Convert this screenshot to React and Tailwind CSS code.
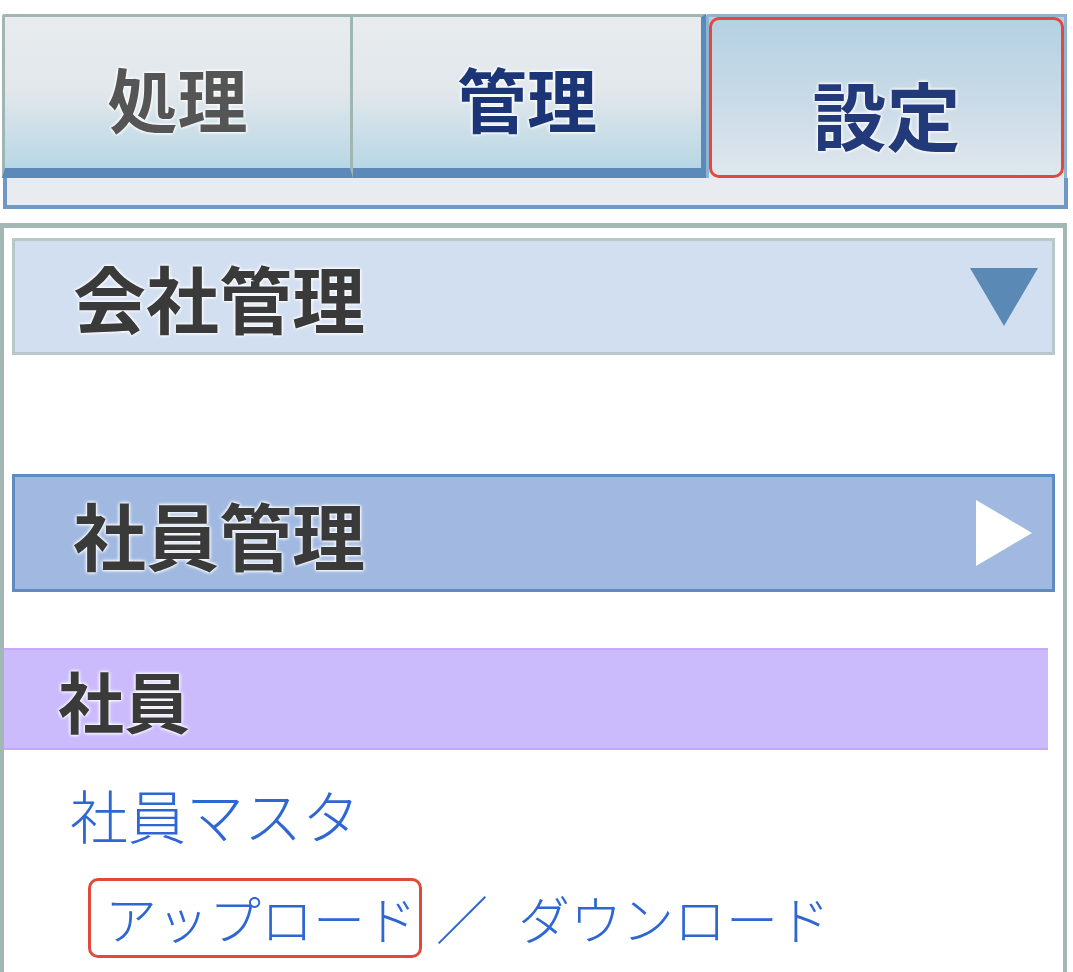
import React from "react";

const jp = { fontFamily: '"Noto Sans CJK JP", "Noto Sans", sans-serif' };

function Tab({ label, active, tone, edge }) {
  if (active) {
    return (
      <div className="relative h-[164px] w-[361px] border-[3px] border-b-0 border-[#8fb3d3] bg-linear-to-b from-[#b3d1e2] via-[#c8dae7] to-[#e1e7ee] flex items-center justify-center pt-[30px] rounded-tl-[3px]">
        <span className="text-[74px] font-bold leading-none text-[#22397a] [text-shadow:0_0_3px_#fff,0_0_3px_#fff,0_0_4px_#fff]">
          {label}
        </span>
        {/* highlight box */}
        <div className="absolute inset-0 border-[3px] border-[#e2493a] rounded-[10px]" />
      </div>
    );
  }
  return (
    <div
      className={
        "h-[164px] border-t-[3px] border-b-[10px] border-t-[#a0b6b2] border-b-[#5b8ab8] bg-linear-to-b from-[#e8ecef] via-[#e1e7eb] to-[#b7d7e5] flex items-center justify-center pt-[10px] " +
        (edge === "first"
          ? "w-[351px] border-x-[3px] border-x-[#a0b6b2] rounded-tl-[3px]"
          : "w-[353px] border-r-[5px] border-r-[#5b8ab8]")
      }
    >
      <span
        className={
          "text-[70px] font-bold leading-none [text-shadow:0_0_3px_#fff,0_0_3px_#fff,0_0_4px_#fff] " +
          (tone === "navy" ? "text-[#1b3577]" : "text-[#555555]")
        }
      >
        {label}
      </span>
    </div>
  );
}

export default function App() {
  return (
    <div className="w-[1073px] h-[972px] bg-white overflow-hidden pt-[14px]" style={jp}>
      {/* top tabs */}
      <div className="pl-[2px] w-[1068px]">
        <div className="flex">
          <Tab label="処理" edge="first" />
          <Tab label="管理" tone="navy" />
          <Tab label="設定" active />
        </div>
        <div className="h-[31px] ml-[1px] border-x-[4px] border-b-[4px] border-[#7098c3] bg-[#e8ecf0]" />
      </div>

      {/* menu panel */}
      <div className="mt-[14px] w-[1067px] h-[800px] border-t-[5px] border-x-[4px] border-[#a3b8b5] pt-[10px]">
        <div className="mx-[8px] h-[117px] border-[3px] border-[#b7c8c8] bg-[#d2dff0] flex items-center justify-between pl-[58px] pr-[14px]">
          <span className="text-[73px] font-bold leading-none text-[#3a3a3a] [text-shadow:0_0_3px_#fff,0_0_3px_#fff,0_0_4px_#fff]">
            会社管理
          </span>
          <svg width="68" height="58" viewBox="0 0 68 58">
            <polygon points="0,0 68,0 34,58" fill="#5b89b6" />
          </svg>
        </div>

        <div className="mt-[119px] mx-[8px] h-[118px] border-[3px] border-[#5f8bc0] bg-[#a1b9e1] flex items-center justify-between pl-[58px] pr-[20px]">
          <span className="text-[73px] font-bold leading-none text-[#3a3a3a] [text-shadow:0_0_3px_#fff,0_0_3px_#fff,0_0_4px_#fff]">
            社員管理
          </span>
          <svg width="56" height="66" viewBox="0 0 56 66">
            <polygon points="0,0 56,33 0,66" fill="#ffffff" />
          </svg>
        </div>

        <div className="mt-[56px] mr-[15px] h-[102px] border-y-[2px] border-[#c6a8f8] bg-[#cbbbfd] flex items-center pl-[54px]">
          <span className="text-[66px] font-bold leading-none text-[#3a3a3a] [text-shadow:0_0_3px_#fff,0_0_3px_#fff,0_0_4px_#fff]">
            社員
          </span>
        </div>

        <div className="h-[104px] flex items-center pl-[66px] mt-[12px]">
          <a className="text-[58px] font-light leading-none text-[#2e66d2]">社員マスタ</a>
        </div>
        <div className="h-[104px] flex items-center pl-[84px] text-[52px] font-light leading-none text-[#2e66d2]">
          <a className="border-[3px] border-[#e04a3a] rounded-[10px] pl-[14px] pr-[2px] py-[11px]">
            アップロード
          </a>
          <span className="ml-[14px]">／</span>
          <a className="ml-[30px]">ダウンロード</a>
        </div>
      </div>
    </div>
  );
}
